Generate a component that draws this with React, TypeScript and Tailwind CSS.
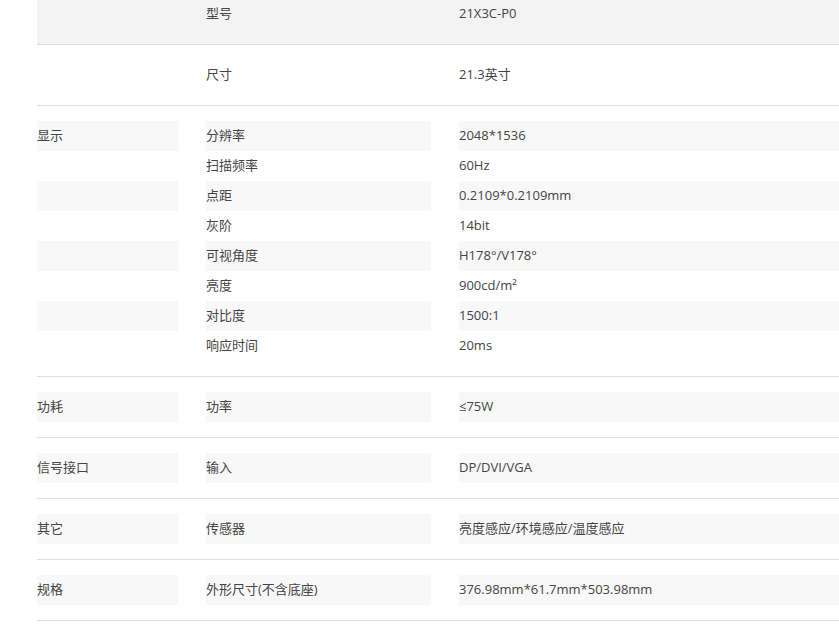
const sections: { label: string; items: [string, string][]; hl?: boolean; nobg?: boolean }[] = [
  { label: "", items: [["型号", "21X3C-P0"]], hl: true },
  { label: "", items: [["尺寸", "21.3英寸"]], nobg: true },
  {
    label: "显示",
    items: [
      ["分辨率", "2048*1536"],
      ["扫描频率", "60Hz"],
      ["点距", "0.2109*0.2109mm"],
      ["灰阶", "14bit"],
      ["可视角度", "H178°/V178°"],
      ["亮度", "900cd/m²"],
      ["对比度", "1500:1"],
      ["响应时间", "20ms"],
    ],
  },
  { label: "功耗", items: [["功率", "≤75W"]] },
  { label: "信号接口", items: [["输入", "DP/DVI/VGA"]] },
  { label: "其它", items: [["传感器", "亮度感应/环境感应/温度感应"]] },
  { label: "规格", items: [["外形尺寸(不含底座)", "376.98mm*61.7mm*503.98mm"]] },
];

export default function App() {
  return (
    <div className="w-[839px] h-[644px] overflow-hidden bg-white text-[13px] text-[#444]" style={{ fontFamily: '"Open Sans", "Noto Sans CJK SC", sans-serif' }}>
      <div className="ml-[37px] w-[900px] -mt-[16px]">
        {sections.map((s, si) => (
          <div key={si} className={`py-[15px] border-b border-[#dddddd] ${s.hl ? "bg-[#f3f3f3]" : ""}`}>
            {s.items.map(([k, v], i) => {
              const bg = !s.hl && !s.nobg && i % 2 === 0 ? "bg-[#f8f8f8]" : "";
              return (
                <div key={i} className="flex h-[30px] gap-[28px]">
                  <div className={`w-[141px] flex items-center ${bg}`}>{i === 0 ? s.label : ""}</div>
                  <div className={`w-[225px] flex items-center ${bg}`}>{k}</div>
                  <div className={`flex-1 flex items-center ${bg}`}>{v}</div>
                </div>
              );
            })}
          </div>
        ))}
      </div>
    </div>
  );
}
